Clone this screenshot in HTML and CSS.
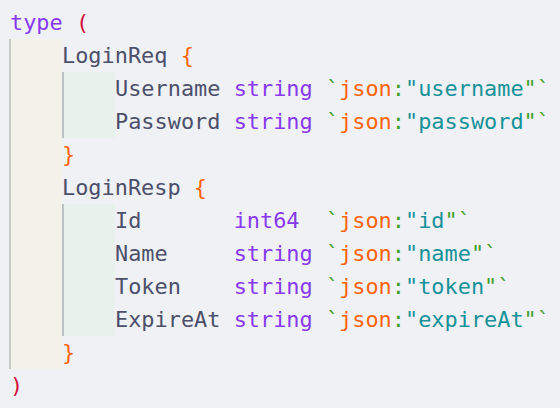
FILE: index.html
```html
<!DOCTYPE html>
<html>
<head>
<meta charset="utf-8">
<link rel="stylesheet" href="styles.css">
</head>
<body>
<div class="code">
  <div class="line"><span class="kw">type</span> <span class="paren">(</span></div>
  <div class="block outer">
    <div class="guide g1"></div>
    <div class="body">
      <div class="line">LoginReq <span class="brace">{</span></div>
      <div class="block">
        <div class="guide g2"></div>
        <div class="body">
          <div class="line">Username <span class="kw">string</span> <span class="tick">`</span><span class="key">json</span><span class="tick">:</span><span class="str">"username</span><span class="tick">"`</span></div>
          <div class="line">Password <span class="kw">string</span> <span class="tick">`</span><span class="key">json</span><span class="tick">:</span><span class="str">"password</span><span class="tick">"`</span></div>
        </div>
      </div>
      <div class="line"><span class="brace">}</span></div>
      <div class="line">LoginResp <span class="brace">{</span></div>
      <div class="block">
        <div class="guide g2"></div>
        <div class="body">
          <div class="line">Id       <span class="kw">int64</span>  <span class="tick">`</span><span class="key">json</span><span class="tick">:</span><span class="str">"id</span><span class="tick">"`</span></div>
          <div class="line">Name     <span class="kw">string</span> <span class="tick">`</span><span class="key">json</span><span class="tick">:</span><span class="str">"name</span><span class="tick">"`</span></div>
          <div class="line">Token    <span class="kw">string</span> <span class="tick">`</span><span class="key">json</span><span class="tick">:</span><span class="str">"token</span><span class="tick">"`</span></div>
          <div class="line">ExpireAt <span class="kw">string</span> <span class="tick">`</span><span class="key">json</span><span class="tick">:</span><span class="str">"expireAt</span><span class="tick">"`</span></div>
        </div>
      </div>
      <div class="line"><span class="brace">}</span></div>
    </div>
  </div>
  <div class="line"><span class="paren">)</span></div>
</div>
</body>
</html>
```

FILE: styles.css
```css
html, body {
  margin: 0;
  padding: 0;
  background: #eff1f5;
}

.code {
  padding: 6px 0 0 10px;
  font-family: "DejaVu Sans Mono", monospace;
  font-size: 21.9px;
  color: #4c4f69;
}

.line {
  height: 33px;
  line-height: 33px;
  white-space: pre;
}

.block {
  display: flex;
}

.block.outer {
  margin-left: -1px;
}

.guide {
  flex: none;
  width: 53px;
  box-sizing: border-box;
  border-left: 2px solid #c9ccc6;
}

.g1 {
  background: #f2f2ea;
}

.g2 {
  background: #e8f1ec;
  border-left-color: #bcc3c6;
}

.body {
  flex: 1;
}

.kw { color: #8839ef; }
.paren { color: #d20f39; }
.brace { color: #fe640b; }
.key { color: #fe640b; }
.tick { color: #40a02b; }
.str { color: #179299; }
```
